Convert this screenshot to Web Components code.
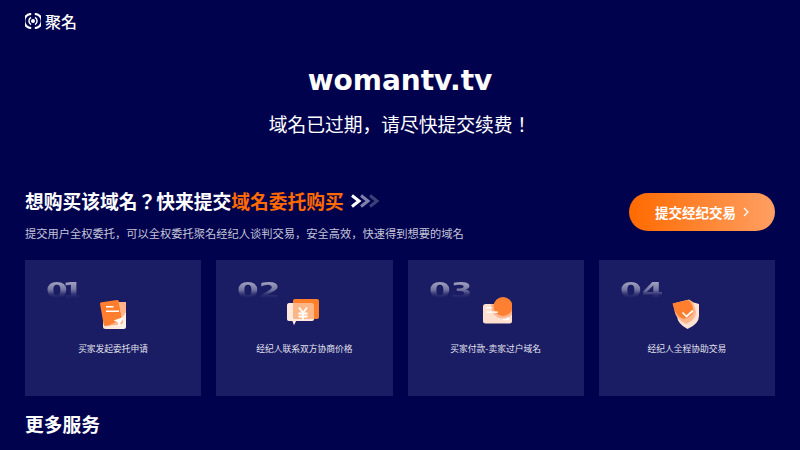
<!DOCTYPE html>
<html>
<head>
<meta charset="utf-8">
<title>womantv.tv</title>
<style>
  html, body { margin: 0; height: 450px; overflow: hidden; }
  body {
    background: #01024e;
    color: #fff;
    font-family: "Noto Sans CJK JP", "Noto Sans CJK SC", sans-serif;
    display: flex;
    flex-direction: column;
  }
</style>
</head>
<body>
<site-header></site-header>
<domain-hero domain="womantv.tv">域名已过期，请尽快提交续费！</domain-hero>
<broker-banner></broker-banner>
<step-list>
  <step-card num="01" text="买家发起委托申请" style="--num-spacing:-4px">
    <svg viewBox="0 0 30 32" width="30" height="32">
      <defs>
        <linearGradient id="p1" x1="0" y1="0" x2="1" y2="1"><stop offset="0" stop-color="#ffd3b8"/><stop offset="1" stop-color="#fff3ec"/></linearGradient>
      </defs>
      <rect x="5" y="2" width="23" height="27" rx="2.500" fill="url(#p1)"/>
      <path d="M2 4 Q1.800 2.500 3.500 2.200 L19 0 Q20.500 -.2 21 1.500 L24.500 22 Q24.800 23.500 23 23.800 L7.500 26 Q6 26.200 5.700 24.500 Z" fill="#ff7f2f"/>
      <path d="M20.800 2 L28 2 L28 12 Q24 20 11 25.200 L23 23.800 Q24.800 23.500 24.500 22 Z" fill="#ffb48a"/>
      <rect x="8" y="6" width="7.500" height="1.500" fill="#fff"/>
      <rect x="8" y="10.500" width="13" height="1.500" fill="#fff"/>
      <path d="M25.500 17 L15.500 20.500 L19.500 22 L21 26 Z" fill="#fff"/>
    </svg>
  </step-card>
  <step-card num="02" text="经纪人联系双方协商价格">
    <svg viewBox="0 0 34 28" width="34" height="28" style="margin-top:-1px">
      <path d="M6 2 Q6 0 8 0 L30 0 Q32 0 32 2 L32 18 Q32 20 30 20 L8 20 Q6 20 6 18 Z" fill="#ff7f2a"/>
      <path d="M2.500 4 L24.500 4 Q27 4 27 6.500 L27 19.500 Q27 22 24.500 22 L9 22 L7 26 L5.500 22 L2.500 22 Q0 22 0 19.500 L0 6.500 Q0 4 2.500 4 Z" fill="#ffe3d3" fill-opacity=".55"/>
      <path d="M2.500 4 L6 4 L6 18 Q6 20 8 20 L27 20 L27 19.500 Q27 22 24.500 22 L9 22 L7 26 L5.500 22 L2.500 22 Q0 22 0 19.500 L0 6.500 Q0 4 2.500 4 Z" fill="#ffe9dd"/>
      <path d="M12 8.500 L16 13.800 L20 8.500 M16 13.800 L16 20.500 M11.500 14.500 L20.500 14.500 M11.500 17.500 L20.500 17.500" fill="none" stroke="#fff" stroke-width="1.800"/>
    </svg>
  </step-card>
  <step-card num="03" text="买家付款-卖家过户域名">
    <svg viewBox="0 0 32 28" width="32" height="28" style="margin-top:-3px">
      <defs>
        <clipPath id="bill"><rect x="3" y="7" width="29" height="19.500" rx="2.500"/></clipPath>
      </defs>
      <rect x="3" y="7" width="29" height="19.500" rx="2.500" fill="#ffe0d0"/>
      <circle cx="23" cy="9.500" r="12" fill="#ffb58f" clip-path="url(#bill)"/>
      <circle cx="23" cy="9.500" r="9.500" fill="#ff8032"/>
      <rect x="6.500" y="10" width="5.500" height="1.300" fill="#fff"/>
      <rect x="6.500" y="14.500" width="11.500" height="1.300" fill="#fff"/>
      <path d="M23 22.500 L29 22.500 L27 20.500" fill="none" stroke="#fff" stroke-width="1.300"/>
    </svg>
  </step-card>
  <step-card num="04" text="经纪人全程协助交易">
    <svg viewBox="0 0 30 31" width="30" height="31" style="margin-top:-1px">
      <path d="M4 5 L16.500 2 L27 5 L27 17 Q27 25 15.500 30 Q5.500 25 5 17 Z" fill="#ffe2d2"/>
      <path d="M1 4.500 L17 .500 L21 3 L24 13 Q24 20 14.500 25 Q5 21 3 14 Z" fill="#ffb48a"/>
      <path d="M.500 4.500 L16 1 Q19 3 20 6 L21.500 12 Q20 17.500 12 20 Q5 17.500 2.500 11 Z" fill="#ff7f2e"/>
      <path d="M11 14 L14.500 17.500 L20.500 12" fill="none" stroke="#fff" stroke-width="1.700" stroke-linecap="round" stroke-linejoin="round"/>
    </svg>
  </step-card>
</step-list>
<more-services></more-services>

<script>
class SiteHeader extends HTMLElement {
  constructor() {
    super();
    this.attachShadow({ mode: 'open' }).innerHTML = `
      <style>
        :host { display: flex; align-items: center; gap: 4px; height: 41px; padding-left: 25px; }
        span { font-size: 16px; font-weight: 500; line-height: 16px; }
        svg { display: block; }
      </style>
      <svg viewBox="0 0 16 16" width="16" height="16" fill="none" stroke="#fff">
        <circle cx="8" cy="8" r="2" fill="#fff" stroke="none"/>
        <path d="M6 4.400 A4.200 4.200 0 0 0 6 11.600 M10 4.400 A4.200 4.200 0 0 1 10 11.600" stroke-width="1.500"/>
        <path d="M6.200 1 A7 7 0 0 0 6.200 15 M9.800 1 A7 7 0 0 1 9.800 15" stroke-width="2.200"/>
      </svg>
      <span>聚名</span>`;
  }
}

class DomainHero extends HTMLElement {
  constructor() {
    super();
    this.attachShadow({ mode: 'open' }).innerHTML = `
      <style>
        :host { display: flex; flex-direction: column; align-items: center; height: 148px; padding-top: 22px; box-sizing: border-box; }
        h1 { margin: 0; font: 700 28px/36px "DejaVu Sans", sans-serif; }
        p { margin: 11px 0 0; font-size: 18.750px; line-height: 28px; }
      </style>
      <h1>${this.getAttribute('domain')}</h1>
      <p><slot></slot></p>`;
  }
}

class BrokerBanner extends HTMLElement {
  constructor() {
    super();
    this.attachShadow({ mode: 'open' }).innerHTML = `
      <style>
        :host { display: flex; justify-content: space-between; align-items: flex-start; padding: 0 25px; height: 71px; }
        h2 { margin: 0; display: flex; align-items: center; font-size: 18.750px; line-height: 24px; font-weight: 700; }
        em { font-style: normal; color: #ff6a00; }
        h2 svg { margin-left: 6px; }
        p { margin: 12px 0 0; font-size: 11.250px; line-height: 16px; color: #c3c4d8; }
        a { display: flex; align-items: center; justify-content: center; gap: 7px; width: 146px; height: 38px; margin-top: 4px; border-radius: 19px;
            background: linear-gradient(90deg, #ff6a00, #ff9f63); font-size: 13.500px; font-weight: 700; color: #fff; }
      </style>
      <div>
        <h2>想购买该域名？快来提交<em>域名委托购买</em>
          <svg viewBox="0 0 30 14" width="30" height="14" fill="none" stroke-width="3">
            <path d="M20 1.500 L27 7 L20 12.500" stroke="#3e4079"/>
            <path d="M11 1.500 L18 7 L11 12.500" stroke="#7f81a8"/>
            <path d="M2 1.500 L9 7 L2 12.500" stroke="#fff"/>
          </svg>
        </h2>
        <p>提交用户全权委托，可以全权委托聚名经纪人谈判交易，安全高效，快速得到想要的域名</p>
      </div>
      <a>提交经纪交易
        <svg viewBox="0 0 6 10" width="6" height="10" fill="none" stroke="#fff" stroke-width="1.200"><path d="M1 1 L5 5 L1 9"/></svg>
      </a>`;
  }
}

class StepList extends HTMLElement {
  constructor() {
    super();
    this.attachShadow({ mode: 'open' }).innerHTML = `
      <style>
        :host { display: grid; grid-template-columns: repeat(4, 1fr); gap: 15px; padding: 0 25px; }
      </style>
      <slot></slot>`;
  }
}

class StepCard extends HTMLElement {
  constructor() {
    super();
    this.attachShadow({ mode: 'open' }).innerHTML = `
      <style>
        :host { display: flex; flex-direction: column; align-items: center; position: relative; height: 136px; background: #1a1c64; }
        .num { position: absolute; left: 21px; top: 18px; font: 700 22px/26px "DejaVu Sans", sans-serif; letter-spacing: var(--num-spacing, 0);
               transform: scaleX(1.420); transform-origin: 0 0;
               background: linear-gradient(180deg, rgba(255,255,255,.6) 15%, rgba(255,255,255,.4) 45%, rgba(255,255,255,.1) 62%, rgba(255,255,255,0) 78%);
               -webkit-background-clip: text; background-clip: text; color: transparent; }
        .icon { height: 32px; margin-top: 40px; display: flex; align-items: flex-start; }
        p { margin: 10px 0 0; font-size: 8.750px; line-height: 14px; color: #e3e3ee; }
      </style>
      <div class="num">${this.getAttribute('num')}</div>
      <div class="icon"><slot></slot></div>
      <p>${this.getAttribute('text')}</p>`;
  }
}

class MoreServices extends HTMLElement {
  constructor() {
    super();
    this.attachShadow({ mode: 'open' }).innerHTML = `
      <style>
        :host { display: block; padding: 14px 25px 0; }
        h2 { margin: 0; font-size: 18.750px; line-height: 28px; font-weight: 700; }
      </style>
      <h2>更多服务</h2>`;
  }
}

customElements.define('site-header', SiteHeader);
customElements.define('domain-hero', DomainHero);
customElements.define('broker-banner', BrokerBanner);
customElements.define('step-list', StepList);
customElements.define('step-card', StepCard);
customElements.define('more-services', MoreServices);
</script>
</body>
</html>
